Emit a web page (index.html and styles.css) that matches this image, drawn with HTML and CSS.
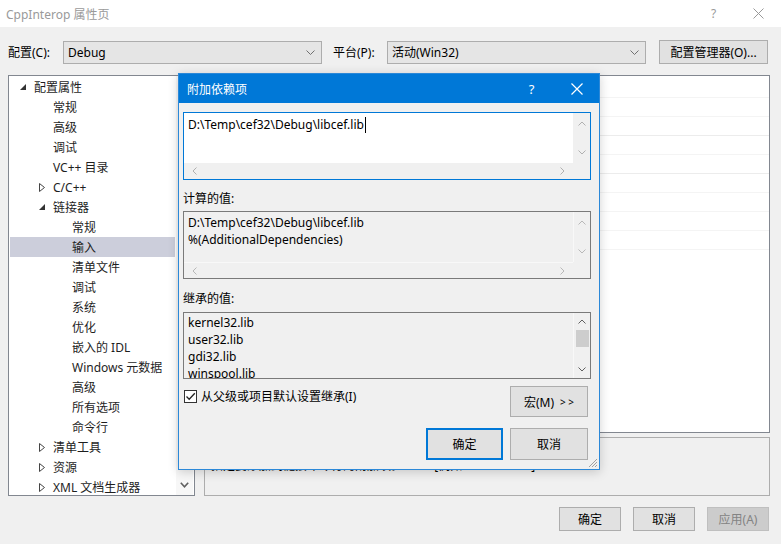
FILE: index.html
```html
<!DOCTYPE html>
<html lang="zh-CN">
<head>
    <meta charset="UTF-8">
    <title>CppInterop 属性页</title>
<link rel="stylesheet" href="styles.css">
</head>
<body>
<div class="window">
    <div class="titlebar">
        <span class="title">CppInterop 属性页</span>
        <span class="cap">?</span>
        <span class="cap"><svg width="11" height="11" viewBox="0 0 11 11"><path d="M0.5 0.5 L10.5 10.5 M10.5 0.5 L0.5 10.5" stroke="#999" stroke-width="1" fill="none"/></svg></span>
    </div>

    <div class="config">
        <span class="cfg-label">配置(C):</span>
        <div class="combo">
            <span>Debug</span>
            <svg width="9" height="5" viewBox="0 0 9 5"><polyline points="0.5,0.5 4.5,4.5 8.5,0.5" fill="none" stroke="#707070"/></svg>
        </div>
        <span class="cfg-label plat">平台(P):</span>
        <div class="combo">
            <span>活动(Win32)</span>
            <svg width="9" height="5" viewBox="0 0 9 5"><polyline points="0.5,0.5 4.5,4.5 8.5,0.5" fill="none" stroke="#707070"/></svg>
        </div>
        <button class="btn mgr">配置管理器(O)...</button>
    </div>

    <div class="main">
        <div class="tree">
            <div class="tree-list">
                <div class="row l0"><span class="arrow"><svg width="6" height="6" viewBox="0 0 6 6"><polygon points="6,0 6,6 0,6" fill="#333"/></svg></span>配置属性</div>
                <div class="row l1"><span class="arrow"></span>常规</div>
                <div class="row l1"><span class="arrow"></span>高级</div>
                <div class="row l1"><span class="arrow"></span>调试</div>
                <div class="row l1"><span class="arrow"></span>VC++ 目录</div>
                <div class="row l1"><span class="arrow"><svg width="6" height="9" viewBox="0 0 6 9"><polygon points="0.5,0.5 5.5,4.5 0.5,8.5" fill="none" stroke="#444"/></svg></span>C/C++</div>
                <div class="row l1"><span class="arrow"><svg width="6" height="6" viewBox="0 0 6 6"><polygon points="6,0 6,6 0,6" fill="#333"/></svg></span>链接器</div>
                <div class="row l2"><span class="arrow"></span>常规</div>
                <div class="row l2 sel"><span class="arrow"></span>输入</div>
                <div class="row l2"><span class="arrow"></span>清单文件</div>
                <div class="row l2"><span class="arrow"></span>调试</div>
                <div class="row l2"><span class="arrow"></span>系统</div>
                <div class="row l2"><span class="arrow"></span>优化</div>
                <div class="row l2"><span class="arrow"></span>嵌入的 IDL</div>
                <div class="row l2"><span class="arrow"></span>Windows 元数据</div>
                <div class="row l2"><span class="arrow"></span>高级</div>
                <div class="row l2"><span class="arrow"></span>所有选项</div>
                <div class="row l2"><span class="arrow"></span>命令行</div>
                <div class="row l1"><span class="arrow"><svg width="6" height="9" viewBox="0 0 6 9"><polygon points="0.5,0.5 5.5,4.5 0.5,8.5" fill="none" stroke="#444"/></svg></span>清单工具</div>
                <div class="row l1"><span class="arrow"><svg width="6" height="9" viewBox="0 0 6 9"><polygon points="0.5,0.5 5.5,4.5 0.5,8.5" fill="none" stroke="#444"/></svg></span>资源</div>
                <div class="row l1"><span class="arrow"><svg width="6" height="9" viewBox="0 0 6 9"><polygon points="0.5,0.5 5.5,4.5 0.5,8.5" fill="none" stroke="#444"/></svg></span>XML 文档生成器</div>
            </div>
            <div class="tree-scroll">
                <svg width="9" height="6" viewBox="0 0 9 6"><polyline points="0.8,0.8 4.5,4.8 8.2,0.8" fill="none" stroke="#606060" stroke-width="1.6"/></svg>
            </div>
        </div>
        <div class="right">
            <div class="grid">
                <div class="grid-row"></div>
                <div class="grid-row"></div>
                <div class="grid-row dark"></div>
                <div class="grid-row"></div>
                <div class="grid-row dark"></div>
                <div class="grid-row"></div>
                <div class="grid-row"></div>
                <div class="grid-row"></div>
                <div class="grid-row"></div>
            </div>
            <div class="desc">
                <div class="desc-title">附加依赖项</div>
                <div class="desc-text">指定要添加到链接命令行的附加项。          [例如 kernel32.lib]</div>
            </div>
        </div>
    </div>

    <div class="footer">
        <button class="btn foot">确定</button>
        <button class="btn foot">取消</button>
        <button class="btn foot disabled">应用(A)</button>
    </div>

    <div class="dialog">
        <div class="dlg-title">
            <span class="dlg-name">附加依赖项</span>
            <span class="dcap">?</span>
            <span class="dcap"><svg width="12" height="12" viewBox="0 0 12 12"><path d="M0.5 0.5 L11.5 11.5 M11.5 0.5 L0.5 11.5" stroke="#fff" stroke-width="1.2" fill="none"/></svg></span>
        </div>
        <div class="dlg-body">
            <div class="tb tb1 focus">
                <div class="tb-text">D:\Temp\cef32\Debug\libcef.lib<span class="caret"></span></div>
                <div class="vscroll">
                    <svg width="8" height="5" viewBox="0 0 8 5"><polyline points="0.5,4.5 4,1 7.5,4.5" fill="none" stroke="#b0b0b0"/></svg>
                    <svg width="8" height="5" viewBox="0 0 8 5"><polyline points="0.5,0.5 4,4 7.5,0.5" fill="none" stroke="#b0b0b0"/></svg>
                </div>
                <div class="hscroll">
                    <svg width="5" height="8" viewBox="0 0 5 8"><polyline points="4.5,0.5 1,4 4.5,7.5" fill="none" stroke="#b0b0b0"/></svg>
                    <svg width="5" height="8" viewBox="0 0 5 8"><polyline points="0.5,0.5 4,4 0.5,7.5" fill="none" stroke="#b0b0b0"/></svg>
                </div>
                <div class="corner"></div>
            </div>

            <div class="lbl">计算的值:</div>
            <div class="tb tb2 ro">
                <div class="tb-text">D:\Temp\cef32\Debug\libcef.lib
%(AdditionalDependencies)</div>
                <div class="vscroll">
                    <svg width="8" height="5" viewBox="0 0 8 5"><polyline points="0.5,4.5 4,1 7.5,4.5" fill="none" stroke="#b8b8b8"/></svg>
                    <svg width="8" height="5" viewBox="0 0 8 5"><polyline points="0.5,0.5 4,4 7.5,0.5" fill="none" stroke="#b8b8b8"/></svg>
                </div>
                <div class="hscroll">
                    <svg width="5" height="8" viewBox="0 0 5 8"><polyline points="4.5,0.5 1,4 4.5,7.5" fill="none" stroke="#b8b8b8"/></svg>
                    <svg width="5" height="8" viewBox="0 0 5 8"><polyline points="0.5,0.5 4,4 0.5,7.5" fill="none" stroke="#b8b8b8"/></svg>
                </div>
                <div class="corner"></div>
            </div>

            <div class="lbl second">继承的值:</div>
            <div class="tb tb3 ro">
                <div class="tb-text">kernel32.lib
user32.lib
gdi32.lib
winspool.lib
comdlg32.lib</div>
                <div class="vscroll thumbed">
                    <span class="sb-btn"><svg width="8" height="5" viewBox="0 0 8 5"><polyline points="0.5,4.5 4,1 7.5,4.5" fill="none" stroke="#606060"/></svg></span>
                    <span class="thumb"></span>
                    <span class="sb-fill"></span>
                    <span class="sb-btn"><svg width="8" height="5" viewBox="0 0 8 5"><polyline points="0.5,0.5 4,4 7.5,0.5" fill="none" stroke="#606060"/></svg></span>
                </div>
            </div>

            <div class="check-row">
                <div class="check">
                    <span class="box"><svg width="11" height="11" viewBox="0 0 11 11"><polyline points="1.5,5.5 4.2,8.3 9.8,2.2" fill="none" stroke="#222" stroke-width="1.3"/></svg></span>
                    <span class="check-text">从父级或项目默认设置继承(I)</span>
                </div>
                <button class="btn macro">宏(M)<span class="gt">&gt; &gt;</span></button>
            </div>

            <div class="dlg-buttons">
                <button class="btn dbtn default">确定</button>
                <button class="btn dbtn">取消</button>
            </div>
        </div>
        <svg class="grip" width="10" height="10" viewBox="0 0 10 10"><path d="M9 1 L1 9 M9 4 L4 9 M9 7 L7 9" stroke="#a0a0a0" stroke-width="1" fill="none"/></svg>
    </div>
</div>
</body>
</html>
```

FILE: styles.css
```css
*{
    box-sizing: border-box;
    margin: 0;
    padding: 0;
}
body{
    width: 781px;
    height: 544px;
    overflow: hidden;
    background: #f0f0f0;
    font-family: "Noto Sans", "Noto Sans CJK SC", sans-serif;
    font-size: 12px;
    color: #000;
}
.window{
    position: relative;
    width: 781px;
    height: 544px;
}
.btn{
    font: inherit;
    background: #e1e1e1;
    border: 1px solid #adadad;
    color: #000;
    display: flex;
    align-items: center;
    justify-content: center;
}

/* title bar */
.titlebar{
    display: flex;
    align-items: center;
    height: 27px;
    background: #fff;
    color: #9a9a9a;
}
.titlebar .title{
    flex: 1;
    padding-left: 6px;
}
.titlebar .cap{
    width: 45px;
    height: 27px;
    display: flex;
    align-items: center;
    justify-content: center;
    font-size: 12px;
}

/* config row */
.config{
    display: flex;
    align-items: center;
    height: 24px;
    margin-top: 13px;
    padding-left: 8px;
}
.cfg-label{
    width: 55px;
}
.cfg-label.plat{
    width: 54px;
    margin-left: 11px;
}
.combo{
    width: 259px;
    height: 23px;
    border: 1px solid #adadad;
    background: #e5e5e5;
    display: flex;
    align-items: center;
    justify-content: space-between;
    padding: 0 6px 0 4px;
}
.mgr{
    width: 109px;
    height: 24px;
    margin-left: 13px;
}

/* tree + property grid */
.main{
    display: flex;
    gap: 9px;
    height: 421px;
    margin-top: 11px;
    padding-left: 8px;
}
.tree{
    width: 187px;
    border: 1px solid #828790;
    background: #fff;
    display: flex;
    overflow: hidden;
}
.tree-list{
    width: 167px;
    padding: 1px 1px 0;
    color: #1e1e1e;
}
.row{
    height: 20px;
    display: flex;
    align-items: center;
    white-space: nowrap;
}
.row.sel{
    background: #cccedb;
}
.row .arrow{
    width: 16px;
    padding-left: 2px;
    display: flex;
    align-items: center;
}
.l0{ padding-left: 8px; }
.l1{ padding-left: 27px; }
.l2{ padding-left: 46px; }
.tree-scroll{
    width: 17px;
    background: #f7f7f7;
    display: flex;
    flex-direction: column;
    justify-content: flex-end;
    align-items: center;
    padding-bottom: 7px;
}
.right{
    width: 566px;
    display: flex;
    flex-direction: column;
    gap: 4px;
}
.grid{
    height: 358px;
    border: 1px solid #828790;
    background: #fff;
    padding-top: 3px;
}
.grid-row{
    height: 19px;
    border-bottom: 1px solid #f4f4f4;
}
.grid-row.dark{
    border-bottom-color: #ececec;
}
.desc{
    flex: 1;
    border: 1px solid #adadad;
    padding: 1px 6px 0;
    line-height: 18px;
}
.desc-title{
    font-weight: bold;
}
.desc-text{
    white-space: pre;
}

/* bottom buttons */
.footer{
    display: flex;
    justify-content: flex-end;
    gap: 12px;
    margin-top: 11px;
    padding-right: 12px;
}
.foot{
    width: 62px;
    height: 24px;
}
.btn.disabled{
    background: #cccccc;
    border-color: #bfbfbf;
    color: #838383;
}

/* modal dialog */
.dialog{
    position: absolute;
    left: 178px;
    top: 73px;
    width: 422px;
    height: 397px;
    background: #f0f0f0;
    border: 1px solid #2b88d8;
    box-shadow: 0 2px 10px rgba(0, 0, 0, 0.18);
}
.dlg-title{
    height: 29px;
    background: #0078d7;
    color: #fff;
    display: flex;
    align-items: center;
    padding-left: 8px;
}
.dlg-name{
    flex: 1;
}
.dcap{
    width: 45px;
    height: 29px;
    display: flex;
    align-items: center;
    justify-content: center;
    font-size: 13px;
}
.dlg-body{
    padding: 9px 8px 0 4px;
}
.tb{
    border: 1px solid #7a7a7a;
    display: grid;
    grid-template-columns: 1fr 17px;
    overflow: hidden;
}
.tb.focus{
    border-color: #0078d7;
    background: #fff;
}
.tb.ro{
    background: #f0f0f0;
}
.tb1{
    height: 68px;
    grid-template-rows: 1fr 16px;
}
.tb2{
    height: 68px;
    grid-template-rows: 1fr 16px;
}
.tb3{
    height: 67px;
}
.tb-text{
    padding: 3px 4px 0;
    line-height: 17px;
    white-space: pre;
    overflow: hidden;
}
.tb2 .tb-text{
    padding-top: 2px;
}
.tb3 .tb-text{
    padding-top: 1px;
}
.caret{
    display: inline-block;
    width: 1px;
    height: 16px;
    background: #000;
    vertical-align: -4px;
    margin-left: 1px;
}
.vscroll{
    background: #f0f0f0;
    display: flex;
    flex-direction: column;
    justify-content: space-between;
    align-items: center;
    padding: 8px 0 8px;
}
.ro .vscroll{
    border-left: 1px solid #f8f8f8;
}
.vscroll.thumbed{
    padding: 0;
    justify-content: flex-start;
}
.sb-btn{
    height: 17px;
    width: 17px;
    display: flex;
    align-items: center;
    justify-content: center;
}
.thumb{
    width: 13px;
    height: 17px;
    background: #cdcdcd;
}
.sb-fill{
    flex: 1;
}
.hscroll{
    background: #f0f0f0;
    display: flex;
    justify-content: space-between;
    align-items: center;
    padding: 0 8px;
}
.ro .hscroll{
    border-top: 1px solid #f8f8f8;
}
.corner{
    background: #f0f0f0;
}
.lbl{
    height: 31px;
    padding-top: 5px;
    display: flex;
    align-items: center;
}
.lbl.second{
    height: 33px;
}
.check-row{
    display: flex;
    justify-content: space-between;
    align-items: flex-start;
    margin-top: 7px;
}
.check{
    display: flex;
    align-items: center;
    gap: 4px;
    margin-top: 3px;
    margin-left: 1px;
    height: 15px;
}
.check .box{
    width: 13px;
    height: 13px;
    border: 1px solid #333;
    background: #fff;
    display: flex;
    align-items: center;
    justify-content: center;
}
.check-text{
    line-height: 15px;
}
.macro{
    width: 78px;
    height: 31px;
    margin-right: 3px;
}
.macro .gt{
    font-size: 10px;
    margin-left: 6px;
}
.dlg-buttons{
    display: flex;
    justify-content: flex-end;
    gap: 7px;
    margin-top: 11px;
    margin-right: 3px;
}
.dbtn{
    width: 78px;
    height: 32px;
}
.dbtn.default{
    width: 77px;
    border: 2px solid #0078d7;
}
.grip{
    position: absolute;
    right: 1px;
    bottom: 1px;
}
```
